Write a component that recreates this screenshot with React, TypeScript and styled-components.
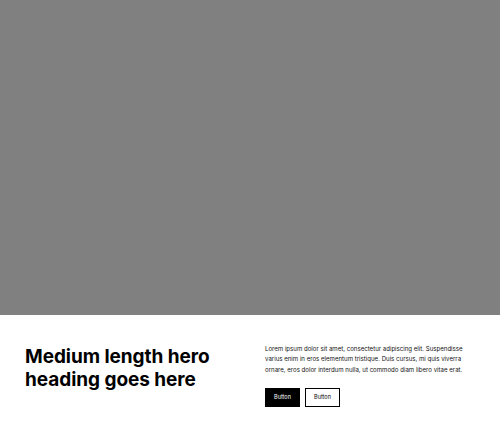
import React from "react";
import styled, { createGlobalStyle } from "styled-components";

const Global = createGlobalStyle`
  html, body { margin: 0; padding: 0; background: #fff; }
  body { font-family: Inter, "Liberation Sans", sans-serif; color: #000; }
  * { box-sizing: border-box; }
`;

const Page = styled.main`
  width: 500px;
  display: flex;
  flex-direction: column;
`;

const Placeholder = styled.div`
  height: 315px;
  background: #808080;
`;

const Content = styled.section`
  padding: 29px 25px 28px;
  display: grid;
  grid-template-columns: 210px 210px;
  column-gap: 30px;
  align-items: start;
`;

const Heading = styled.h1`
  margin: 0;
  margin-top: 1px;
  font-size: 19px;
  line-height: 23px;
  font-weight: 700;
  letter-spacing: -0.05px;
`;

const Text = styled.p`
  margin: 0;
  font-size: 6.1px;
  line-height: 10.4px;
  font-weight: 400;
  color: #111;
`;

const Actions = styled.div`
  display: flex;
  gap: 5px;
  margin-top: 13px;
`;

const Button = styled.button<{ $variant: "primary" | "secondary" }>`
  height: 19px;
  padding: 0 8px;
  min-width: 35px;
  font-family: Inter, "Liberation Sans", sans-serif;
  font-size: 5.5px;
  line-height: 1;
  border: 1px solid #000;
  background: ${(p) => (p.$variant === "primary" ? "#000" : "#fff")};
  color: ${(p) => (p.$variant === "primary" ? "#fff" : "#000")};
  display: flex;
  align-items: center;
  justify-content: center;
  cursor: pointer;
`;

export default function App() {
  return (
    <>
      <Global />
      <Page>
        <Placeholder />
        <Content>
          <Heading>Medium length hero heading goes here</Heading>
          <div>
            <Text>
              Lorem ipsum dolor sit amet, consectetur adipiscing elit. Suspendisse varius enim in eros
              elementum tristique. Duis cursus, mi quis viverra ornare, eros dolor interdum nulla, ut
              commodo diam libero vitae erat.
            </Text>
            <Actions>
              <Button $variant="primary">Button</Button>
              <Button $variant="secondary">Button</Button>
            </Actions>
          </div>
        </Content>
      </Page>
    </>
  );
}
